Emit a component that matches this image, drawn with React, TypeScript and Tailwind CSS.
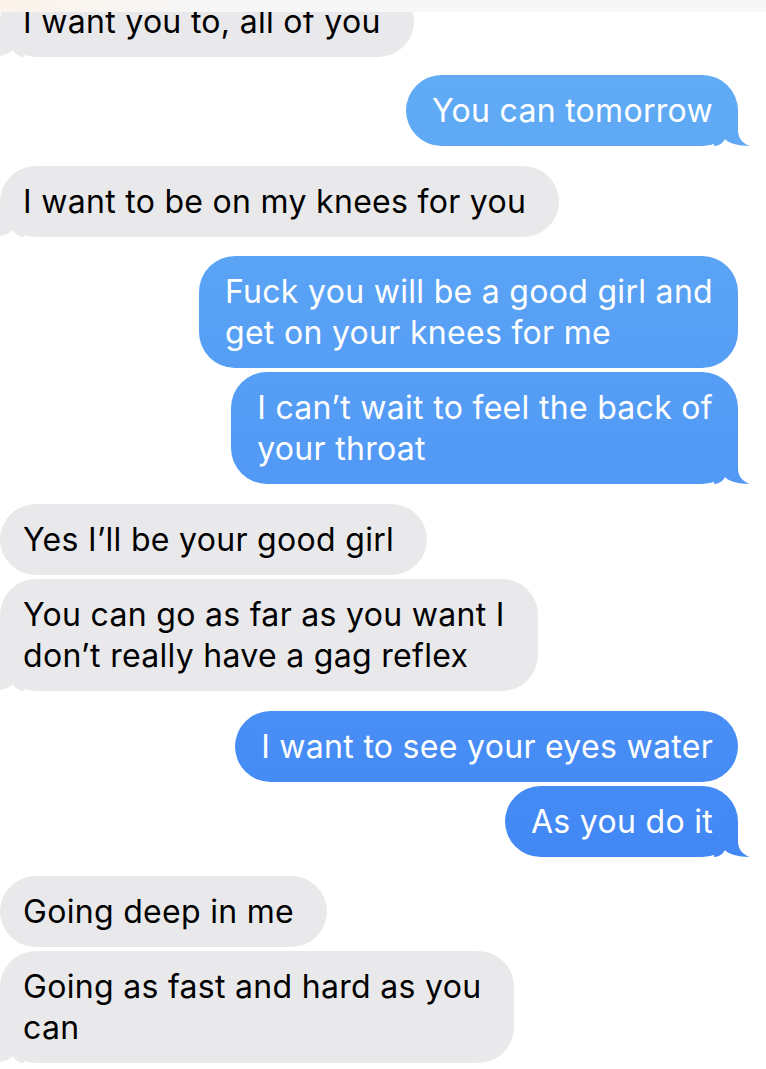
type Msg = {
  from: 'me' | 'them';
  lines: string[];
  tail?: boolean;
  gap: string;
};

const BLUE_BG = 'bg-[linear-gradient(180deg,#64aff5_0%,#3a7ef5_100%)] bg-fixed';
// tail drawn in a 36x36 box whose x=24 sits on the bubble edge
const TAIL_PATH = "[clip-path:path('M0_36C5_36_9_33_11_29C14_33_24_36_36_36C30_34_25_30_24_22L24_0L0_0Z')]";

const messages: Msg[] = [
  { from: 'them', lines: ['I want you to, all of you'], tail: true, gap: '-mt-[14px]' },
  { from: 'me', lines: ['You can tomorrow'], tail: true, gap: 'mt-[18px]' },
  { from: 'them', lines: ['I want to be on my knees for you'], tail: true, gap: 'mt-[20px]' },
  { from: 'me', lines: ['Fuck you will be a good girl and', 'get on your knees for me'], gap: 'mt-[19px]' },
  { from: 'me', lines: ['I can’t wait to feel the back of', 'your throat'], tail: true, gap: 'mt-[4px]' },
  { from: 'them', lines: ['Yes I’ll be your good girl'], gap: 'mt-[20px]' },
  { from: 'them', lines: ['You can go as far as you want I', 'don’t really have a gag reflex'], tail: true, gap: 'mt-[4px]' },
  { from: 'me', lines: ['I want to see your eyes water'], gap: 'mt-[20px]' },
  { from: 'me', lines: ['As you do it'], tail: true, gap: 'mt-[4px]' },
  { from: 'them', lines: ['Going deep in me'], gap: 'mt-[19px]' },
  { from: 'them', lines: ['Going as fast and hard as you', 'can'], tail: true, gap: 'mt-[4px]' },
];

function Bubble({ msg }: { msg: Msg }) {
  const mine = msg.from === 'me';
  return (
    <div className={`flex ${mine ? 'justify-end' : 'justify-start'} ${msg.gap}`}>
      <div
        className={`relative rounded-[36px] py-[15px] text-[32px] leading-[41px] tracking-[0.3px] ${
          mine ? `${BLUE_BG} text-white pl-[26px] pr-[25px]` : 'bg-[#e9e9eb] text-black pl-[23px] pr-[33px]'
        }`}
      >
        {msg.tail &&
          (mine ? (
            <div className={`absolute bottom-0 right-[-12px] h-[36px] w-[36px] ${BLUE_BG} ${TAIL_PATH}`} />
          ) : (
            <div className={`absolute bottom-0 left-[-12px] h-[36px] w-[36px] -scale-x-100 bg-[#e9e9eb] ${TAIL_PATH}`} />
          ))}
        {msg.lines.map((line) => (
          <span key={line} className="relative block whitespace-nowrap">
            {line}
          </span>
        ))}
      </div>
    </div>
  );
}

export default function App() {
  return (
    <div className="relative min-h-screen overflow-hidden bg-white font-['Inter','Noto_Sans',sans-serif]">
      {/* top strip from the status / nav bar that was cropped off */}
      <div className="absolute inset-x-0 top-0 z-10 h-[12px] bg-[linear-gradient(90deg,#fcf3ea_0%,#f7f7f7_25%,#f7f7f7_100%)]" />
      <div className="flex flex-col pr-[28px]">
        {messages.map((m, i) => (
          <Bubble key={i} msg={m} />
        ))}
      </div>
    </div>
  );
}
